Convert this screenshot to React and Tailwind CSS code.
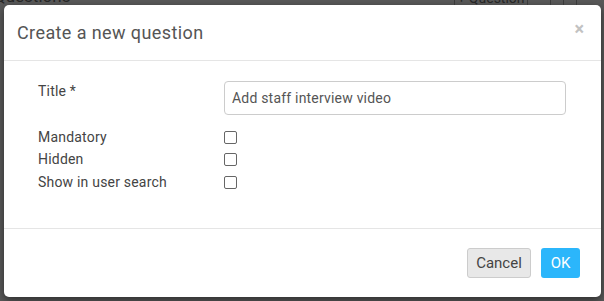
import React from 'react'

export default function App() {
  const options = ['Mandatory', 'Hidden', 'Show in user search']

  return (
    <div
      className="relative h-[301px] w-[604px] overflow-hidden bg-[#595959]"
      style={{ fontFamily: 'Roboto, "Liberation Sans", sans-serif' }}
    >
      {/* page behind the overlay */}
      <div className="flex h-[5px] items-end overflow-hidden">
        <span className="-ml-[6px] text-[17px] leading-none text-[#262626]">Questions</span>
        <div className="ml-auto flex h-[5px] items-end">
          <div className="flex h-[12px] w-[74px] items-end justify-center border-l border-r border-[#3a3a3a] text-[14px] leading-none text-[#262626]">
            + Question
          </div>
          <div className="ml-[22px] h-[12px] w-[13px] border-l border-[#3a3a3a]" />
          <div className="h-[12px] w-[13px] border-l border-[#3a3a3a]" />
          <div className="h-[12px] w-[28px] border-l border-[#3a3a3a]" />
        </div>
      </div>

      {/* modal */}
      <div className="ml-[4px] mr-[3px] flex h-[292px] flex-col rounded-[5px] bg-white shadow-[0_3px_9px_rgba(0,0,0,0.5)]">
        <div className="flex h-[56px] items-center justify-between border-b border-[#e5e5e5] pl-[13px] pr-[17px]">
          <h4 className="text-[18px] tracking-[0.4px] text-[#555]">Create a new question</h4>
          <button className="-mt-[8px] text-[18px] font-bold leading-none text-[#c2c2c2]">×</button>
        </div>

        <div className="flex-1 pl-[34px] pr-[35px] pt-[20px]">
          <div className="flex">
            <label className="w-[186px] text-[14px] leading-[20px] tracking-[0.2px] text-[#444]">Title *</label>
            <input
              className="h-[34px] flex-1 rounded-[4px] border border-[#ccc] px-[7px] text-[14px] tracking-[0.2px] text-[#555] outline-none"
              defaultValue="Add staff interview video"
            />
          </div>
          <div className="mt-[11px] flex flex-col">
            {options.map((o) => (
              <div key={o} className="flex h-[22.5px] items-center">
                <span className="w-[186px] text-[14px] tracking-[0.2px] text-[#444]">{o}</span>
                <span className="h-[13px] w-[13px] rounded-[2px] border border-[#666] bg-white" />
              </div>
            ))}
          </div>
        </div>

        <div className="flex h-[69px] items-start justify-end gap-[10px] border-t border-[#e5e5e5] pr-[21px] pt-[19px]">
          <button className="h-[30px] w-[64px] rounded-[3px] border border-[#ccc] bg-[#e8e8e8] text-[15px] text-[#444]">
            Cancel
          </button>
          <button className="h-[30px] w-[39px] rounded-[3px] bg-[#2bb6fb] text-[15px] text-white">OK</button>
        </div>
      </div>
    </div>
  )
}
